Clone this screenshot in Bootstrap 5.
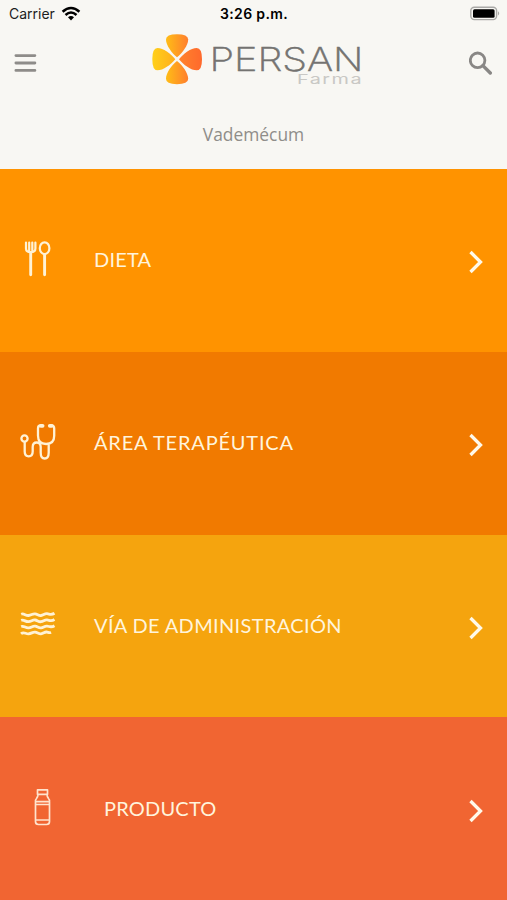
<!DOCTYPE html>
<html lang="es">
<head>
<meta charset="utf-8">
<meta name="viewport" content="width=device-width, initial-scale=1">
<title>Persan Farma</title>
<link href="https://cdn.jsdelivr.net/npm/bootstrap@5.3.0/dist/css/bootstrap.min.css" rel="stylesheet">
<style>
body{background:#f8f7f3;font-family:Inter,"Liberation Sans",sans-serif}
svg{display:block;flex:none}
.screen{height:900px}
.statusbar{height:28px;font-size:14px;line-height:28px;color:#1d1d1d;padding:0 6px 0 9px}
.statusbar .side{flex:1 1 0;gap:6px}
.clock{font-weight:600;color:#000;letter-spacing:.35px;margin-right:2px}
.brandbar{height:70px;padding:0 14px}
.logo{margin:-6px 0 0 8px}
.subtitle{height:71px;padding-top:22px;font:17.4px/28px "Open Sans",sans-serif;color:#8f8d89}
.tile{flex:1 1 0;min-height:0;color:#fff4dc;padding:0 22px 0 20px;text-decoration:none;font-family:Lato,"Open Sans",sans-serif;font-size:20px}
.tile:hover{color:#fff}
.tile .pic{width:74px;padding-bottom:3px}
.tile .lbl{padding-bottom:2px}
.tile .chev{margin-top:4px}
.t-diet{background:#ff9300}.t-area{background:#f17a00}.t-via{background:#f5a40e}.t-prod{background:#f16532}
.l-diet{letter-spacing:.2px}.l-area{letter-spacing:.8px}.l-via{letter-spacing:.34px}.l-prod{letter-spacing:.2px;margin-left:10px}
</style>
<script src="https://cdn.jsdelivr.net/npm/bootstrap@5.3.0/dist/js/bootstrap.bundle.min.js"></script>
</head>
<body>
<div class="screen d-flex flex-column overflow-hidden">
  <header>
    <div class="statusbar d-flex align-items-center">
      <div class="side d-flex align-items-center"><span>Carrier</span>
        <svg width="20" height="16" viewBox="0 0 20 16" fill="none" stroke="#000" stroke-width="2.5"><path d="M1.6 5.8Q10-1.8 18.4 5.8M4.5 9Q10 4 15.5 9"/><path d="M7 11.3Q10 8.7 13 11.3L10 14.4Z" fill="#000" stroke="none"/></svg>
      </div>
      <span class="clock">3:26 p.m.</span>
      <div class="side d-flex justify-content-end">
        <svg width="31" height="16" viewBox="0 0 31 16"><rect x=".8" y="1.2" width="25.8" height="12.4" rx="3.5" fill="#f8f7f3" stroke="#aaa9a7" stroke-width="1.4"/><rect x="3" y="3.2" width="21.6" height="8.5" rx="1.5"/><path d="M28 5.2q2.4 2.2 0 4.4z" fill="#aaa9a7"/></svg>
      </div>
    </div>
    <div class="brandbar d-flex align-items-center justify-content-between">
      <svg width="24" height="24" viewBox="0 0 24 24" stroke="#8e8c89" stroke-width="2.8" stroke-linecap="round"><path d="M1.9 4.6h19M1.9 12h19M1.9 19.4h19"/></svg>
      <svg class="logo" width="216" height="60" viewBox="150 30 216 60" role="img">
        <defs>
          <linearGradient id="gv"><stop offset="0" stop-color="#ffbd16"/><stop offset="1" stop-color="#ff7e2d"/></linearGradient>
          <linearGradient id="gl"><stop offset="0" stop-color="#ffd018"/><stop offset="1" stop-color="#ffae1c"/></linearGradient>
          <linearGradient id="gr"><stop offset="0" stop-color="#ff832c"/><stop offset="1" stop-color="#ff692c"/></linearGradient>
        </defs>
        <path fill="url(#gv)" d="M177 57.3C171.500 53 166 45 166 39.500Q166 34.200 177 34.200T188.200 39.500C188.200 45 182.500 53 177 57.300Z"/>
        <path fill="url(#gv)" d="M177 61C182.500 65.300 188.200 73 188.200 78.800Q188.200 84.200 177 84.200T166 78.800C166 73 171.500 65.300 177 61Z"/>
        <path fill="url(#gl)" d="M175.300 59.200C171 64.700 163 70.300 157.500 70.300Q152.300 70.300 152.300 59.200T157.500 48C163 48 171 53.700 175.300 59.200Z"/>
        <path fill="url(#gr)" d="M179 59.200C183.300 53.700 191 48 196.700 48Q202 48 202 59.200T196.700 70.300C191 70.300 183.300 64.700 179 59.200Z"/>
        <text x="209.500" y="71" font-family="Inter,sans-serif" font-weight="200" font-size="32.500" fill="#747371" stroke="#747371" stroke-width=".5" textLength="154" lengthAdjust="spacingAndGlyphs">PERSAN</text>
        <text x="297" y="84.300" font-family="Inter,sans-serif" font-weight="400" font-size="13.500" letter-spacing="1" fill="#c9c8c5" textLength="66" lengthAdjust="spacingAndGlyphs">Farma</text>
      </svg>
      <svg width="24" height="24" viewBox="0 0 24 24" fill="none" stroke="#898785" stroke-width="2.8"><circle cx="8.600" cy="9.300" r="7.300"/><path d="M13.900 14.600L21.300 22" stroke-width="3.400" stroke-linecap="round"/></svg>
    </div>
    <div class="subtitle text-center">Vademécum</div>
  </header>
  <main class="d-flex flex-column flex-fill">
    <a href="#" class="tile t-diet d-flex align-items-center">
      <span class="pic"><svg width="36" height="38" viewBox="0 0 36 38" fill="none" stroke="#fff2d5" stroke-width="2.200" stroke-linecap="round"><path d="M6 2.500v6q0 3.700 4.700 3.700t4.700-3.700v-6M9.200 2.500v8M12.300 2.500v8"/><path d="M10.700 12.500v22.200M24.600 14.500v20.200" stroke-width="2.900"/><ellipse cx="24.600" cy="8.200" rx="4.800" ry="5.900"/></svg></span>
      <span class="lbl l-diet">DIETA</span>
      <svg class="chev ms-auto" width="18" height="26" viewBox="0 0 18 26" fill="none" stroke="#fff9ea" stroke-width="3.300"><path d="M3.500 3L13.500 13 3.500 23"/></svg>
    </a>
    <a href="#" class="tile t-area d-flex align-items-center">
      <span class="pic"><svg width="36" height="38" viewBox="0 0 36 38" fill="none" stroke="#fff2d5" stroke-width="2.300" stroke-linecap="round" stroke-linejoin="round"><circle cx="4.500" cy="15.500" r="3.100"/><path d="M4.700 19.500v9q0 4.800 4 4.800t4-4.800v-4.500q0-4.500 4-4.500t4 4.500v5.500q0 6 4 6t4-6V21.500M20.500 2.500q-2.500 0-2.500 3v7.300q0 8.200 8.100 8.200t8.100-8.200V5.500q0-3-2.500-3"/><path d="M20.800 2.800h1.800M29.800 2.800h1.800" stroke-width="3.800"/></svg></span>
      <span class="lbl l-area">ÁREA TERAPÉUTICA</span>
      <svg class="chev ms-auto" width="18" height="26" viewBox="0 0 18 26" fill="none" stroke="#fff9ea" stroke-width="3.300"><path d="M3.500 3L13.500 13 3.500 23"/></svg>
    </a>
    <a href="#" class="tile t-via d-flex align-items-center">
      <span class="pic"><svg width="36" height="26" viewBox="0 0 36 26" fill="none" stroke="#fff2d5" stroke-width="2.800"><path id="wave" d="M1.200 3.200C4 2 5.500 4.800 8.500 4.500S12.500 2.500 15 2.800s3.500 2 6 1.700 3.500-2 6-1.800 4 1.800 7.500-.4"/><use href="#wave" y="6.200"/><use href="#wave" y="12.400"/><path d="M1 22.800C4 20.200 5.500 23 8.500 22.800S12.500 21 15 21.200s3.500 1.800 6 1.600 3.500-2 5.500-1.800 2.500 1.200 4.500.2"/></svg></span>
      <span class="lbl l-via">VÍA DE ADMINISTRACIÓN</span>
      <svg class="chev ms-auto" width="18" height="26" viewBox="0 0 18 26" fill="none" stroke="#fff9ea" stroke-width="3.300"><path d="M3.500 3L13.500 13 3.500 23"/></svg>
    </a>
    <a href="#" class="tile t-prod d-flex align-items-center">
      <span class="pic"><svg width="36" height="40" viewBox="0 0 36 40" fill="none" stroke="#ffe3cd" stroke-width="1.700" stroke-linejoin="round"><path d="M17.500 2.800h10v4.500h-10zM18 7.300q0 2.500-1.500 4.200-1.500 1.500-1 3.200h14q.5-1.700-1-3.200-1.500-1.700-1.500-4.200M15.500 14.700v19.800q0 3 3 3h8q3 0 3-3V14.700M15.500 17.500h14M15.500 33h14"/></svg></span>
      <span class="lbl l-prod">PRODUCTO</span>
      <svg class="chev ms-auto" width="18" height="26" viewBox="0 0 18 26" fill="none" stroke="#fff9ea" stroke-width="3.300"><path d="M3.500 3L13.500 13 3.500 23"/></svg>
    </a>
  </main>
</div>
</body>
</html>
